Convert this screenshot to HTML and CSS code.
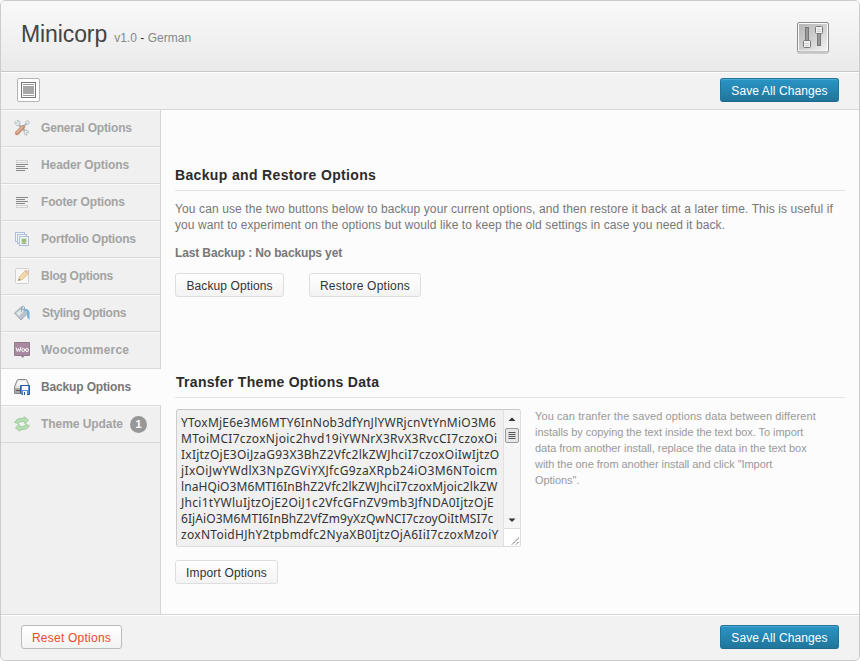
FILE: index.html
```
<!DOCTYPE html>
<html lang="en">
<head>
<meta charset="utf-8">
<title>Minicorp Options</title>
<link rel="stylesheet" href="styles.css">
</head>
<body>
<div class="panel">
  <header class="header">
    <div class="brand"><h1>Minicorp</h1><span class="version">v1.0 <b>-</b> German</span></div>
    <svg class="logo" width="34" height="34" viewBox="0 0 34 34">
      <defs><linearGradient id="lg" x1="0" y1="0" x2="1" y2="1"><stop offset="0" stop-color="#b5b5b5"/><stop offset=".55" stop-color="#d2d2d2"/><stop offset="1" stop-color="#f4f4f4"/></linearGradient></defs>
      <rect x="1.5" y="2.5" width="31" height="30" rx="1.5" fill="#fff" stroke="#ccc"/>
      <rect x="1.5" y="1.5" width="31" height="29.500" rx="1.500" fill="#fafafa" stroke="#8c8c8c"/>
      <rect x="3" y="3" width="28" height="26.500" fill="url(#lg)"/>
      <rect x="9.500" y="6.500" width="3" height="14" fill="#999" stroke="#777"/>
      <rect x="21.500" y="11.500" width="3" height="13" fill="#999" stroke="#777"/>
      <rect x="7.500" y="19.500" width="7" height="7" rx="1" fill="#f2f2f2" stroke="#777"/>
      <rect x="19.500" y="5.500" width="7" height="7" rx="1" fill="#f2f2f2" stroke="#777"/>
      <path d="M9 22.500h4M9 24.500h4M21 8.500h4M21 10.500h4" stroke="#ccc"/>
    </svg>
  </header>
  <div class="toolbar">
    <button class="expand" aria-label="Expand"><svg width="15" height="16" viewBox="0 0 15 16"><rect x=".5" y=".5" width="14" height="15" fill="#fff" stroke="#777"/><path d="M2 2.500h11M2 13.500h11" stroke="#999"/><rect x="2" y="4" width="11" height="8" fill="#a6a6a6"/></svg></button>
    <button class="btn primary">Save All Changes</button>
  </div>
  <div class="body">
    <nav class="side">
      <a class="i1"><svg viewBox="0 0 16 16"><path d="M1 15h6M10 15h4" stroke="#ddd"/><path d="M4 4L12 12" stroke="#9fb0b0" stroke-width="2.400"/><path d="M1 1.500L3 3.500L4.500 2L3 .5C5 0 6.500 1.500 6 4L4.500 5.500C2.500 6 .5 4.500 1 1.500Z" fill="#e8eeee" stroke="#9dabab" stroke-width=".8"/><path d="M10 11.500L12 10C14 10 15 12 14.500 13L13 12L12 13.500L13 15C11 15 9.500 13.500 10 11.500Z" fill="#e8eeee" stroke="#9dabab" stroke-width=".8"/><path d="M9 7L12.500 3.500" stroke="#a5b2b2" stroke-width="2"/><circle cx="13.500" cy="2.500" r="1.700" fill="#f0f0f0" stroke="#a5b2b2"/><path d="M3 13L9 7" stroke="#b87452" stroke-width="4" stroke-linecap="round"/><path d="M3 12.500L8.500 7" stroke="#d9a387" stroke-width="2.200" stroke-linecap="round"/></svg><span>General Options</span></a>
      <a class="i2"><svg viewBox="0 0 16 16"><rect x="2.500" y="3.500" width="11" height="2" fill="#f4f4f4" stroke="#ccc"/><path d="M2 7.500h12M2 9.500h9M2 11.500h12M2 13.500h9" stroke="#777"/></svg><span>Header Options</span></a>
      <a class="i3"><svg viewBox="0 0 16 16"><path d="M2 3.500h12M2 5.500h9M2 7.500h12M2 9.500h9" stroke="#777"/><rect x="2.500" y="11.500" width="11" height="2" fill="#f4f4f4" stroke="#ccc"/></svg><span>Footer Options</span></a>
      <a class="i4"><svg viewBox="0 0 16 16"><g fill="#f5f8fa" stroke="#a0b7d9"><rect x="1.500" y="1.500" width="9" height="9"/><rect x="3.500" y="3.500" width="9" height="9"/><rect x="5.500" y="5.500" width="9" height="9"/></g><rect x="7" y="7" width="6" height="6" fill="#cfdfbd"/><rect x="8" y="8" width="4" height="3" fill="#86b961"/><path d="M10 10v3M8 12.500h4" stroke="#8aa26c"/></svg><span>Portfolio Options</span></a>
      <a class="i5"><svg viewBox="0 0 16 16"><rect x="1.500" y=".5" width="13" height="15" rx="1" fill="#fafafa" stroke="#ccc"/><path d="M4.500 12.500L5.500 8.500L11.500 2.500Q13.500 2 15 5L8.500 11.500Z" fill="#f2d79c" stroke="#d9b272" stroke-width=".8"/><path d="M11.500 2.500Q13.500 1.500 15 5L13.500 6L10.500 3.500Z" fill="#e5b7a0"/><path d="M4.200 12.800L5 10.500L6.800 12Z" fill="#777"/></svg><span>Blog Options</span></a>
      <a class="i6"><svg viewBox="0 0 16 16"><path d="M9 4Q14 3 15.500 7V15L13 12V7Z" fill="#5fa8d3"/><path d="M.5 8L7.500 2L13 8.500L7 15Z" fill="#b5bec6" stroke="#939da5"/><path d="M2.500 8L7.500 4L9.500 6.500L4.500 11Z" fill="#e3e8eb"/><path d="M7.500 7V2Q9 0 10.500 2V5" fill="none" stroke="#7ba6c2"/></svg><span>Styling Options</span></a>
      <a class="i7"><svg viewBox="0 0 16 16"><path d="M1 0H15Q16 0 16 1V13Q16 14 15 14H10L9 16L7 14H1Q0 14 0 13V1Q0 0 1 0Z" fill="#7f6679"/><rect x="1" y="1" width="14" height="12" fill="#9c7893"/><path d="M2 5.500L3.300 9.500L4.500 6.500L5.700 9.500L7 5" fill="none" stroke="#fff"/><circle cx="9.300" cy="8" r="1.500" fill="none" stroke="#fff"/><circle cx="13" cy="8" r="1.500" fill="none" stroke="#fff"/></svg><span>Woocommerce</span></a>
      <a class="i8 active"><svg viewBox="0 0 16 16"><path d="M3 1.500Q3.300 .5 4.500 .5H11.500Q12.700 .5 13 1.500L15.500 8V14.500H.5V8Z" fill="#e3e3e3" stroke="#888"/><path d="M4 2H12L13.500 7H2.500Z" fill="#f8f8f8"/><rect x="1" y="9" width="6" height="5" fill="#aaa"/><path d="M2 11.500h4" stroke="#555"/><path d="M6.500 6.500H15.500V15.500H8L6.500 14Z" fill="#5b8fd8" stroke="#2858a4"/><rect x="8" y="7" width="6" height="4" fill="#fff"/><rect x="9" y="12" width="4" height="4" fill="#f4f4f4"/><path d="M10.500 13v3" stroke="#2858a4"/></svg><span>Backup Options</span></a>
      <a class="i9"><svg viewBox="0 0 16 16"><g fill="#aedaaa" stroke="#86bf86" stroke-width=".8" stroke-linejoin="round"><path d="M.5 6.500Q3 1.500 9.500 2.500L10 .8L14.500 4L11 8L10.500 5.800Q6 4.500 4.500 7.500Z"/><path d="M15.500 9.500Q13 14.500 6.500 13.500L6 15.200L1.500 12L5 8L5.500 10.200Q10 11.500 11.500 8.500Z"/></g></svg><span>Theme Update</span><i class="badge">1</i></a>
    </nav>
    <main class="main">
      <section class="backup">
        <h2 class="h-backup">Backup and Restore Options</h2>
        <p class="desc"><span class="d1">You can use the two buttons below to backup your current options, and then restore it back at a later time. This is useful if</span><br><span class="d2">you want to experiment on the options but would like to keep the old settings in case you need it back.</span></p>
        <p class="last">Last Backup : No backups yet</p>
        <div class="actions"><button class="btn w109">Backup Options</button><button class="btn w112">Restore Options</button></div>
      </section>
      <section class="transfer">
        <h2 class="h-transfer">Transfer Theme Options Data</h2>
        <div class="row">
          <div class="textbox">
            <div class="data">
              <div>YToxMjE6e3M6MTY6InNob3dfYnJlYWRjcnVtYnMiO3M6</div>
              <div>MToiMCI7czoxNjoic2hvd19iYWNrX3RvX3RvcCI7czoxOi</div>
              <div>IxIjtzOjE3OiJzaG93X3BhZ2Vfc2lkZWJhciI7czoxOiIwIjtzO</div>
              <div>jIxOiJwYWdlX3NpZGViYXJfcG9zaXRpb24iO3M6NToicm</div>
              <div>lnaHQiO3M6MTI6InBhZ2Vfc2lkZWJhciI7czoxMjoic2lkZW</div>
              <div>Jhci1tYWluIjtzOjE2OiJ1c2VfcGFnZV9mb3JfNDA0IjtzOjE</div>
              <div>6IjAiO3M6MTI6InBhZ2VfZm9yXzQwNCI7czoyOiItMSI7c</div>
              <div>zoxNToidHJhY2tpbmdfc2NyaXB0IjtzOjA6IiI7czoxMzoiY</div>
            </div>
            <div class="scroll">
              <div class="track">
                <svg width="16" height="18" viewBox="0 0 16 18"><path d="M4.500 11L8 7.500L11.500 11Z" fill="#333"/></svg>
                <svg width="16" height="16" viewBox="0 0 16 16"><rect x="1.500" y=".5" width="13" height="14" rx="1.500" fill="#e6e6e6" stroke="#999"/><path d="M4.500 4.500h7M4.500 6.500h7M4.500 8.500h7M4.500 10.500h7" stroke="#555"/></svg>
                <svg class="down" width="16" height="17" viewBox="0 0 16 17"><path d="M4.500 7.500L8 11L11.500 7.500Z" fill="#333"/></svg>
              </div>
              <svg class="grip" width="16" height="17" viewBox="0 0 16 17"><path d="M8 15.500L15 8.500M12 15.500L15 12.500" stroke="#444" stroke-dasharray="1.500 .7"/></svg>
            </div>
          </div>
          <p class="help"><span class="p1">You can tranfer the saved options data between different</span><br>installs by copying the text inside the text box. To import<br>data from another install, replace the data in the text box<br>with the one from another install and click "Import<br>Options".</p>
        </div>
        <button class="btn w103">Import Options</button>
      </section>
    </main>
  </div>
  <footer class="footer">
    <button class="btn reset">Reset Options</button>
    <button class="btn primary">Save All Changes</button>
  </footer>
</div>
</body>
</html>
```
FILE: styles.css
```
* { box-sizing: border-box; }
body { margin: 0; background: #fff; font: 12px/16px "Liberation Sans", Arial, sans-serif; color: #777; white-space: nowrap; }
h1, h2, p { margin: 0; }
.panel { width: 860px; height: 661px; border: 1px solid #ccc; border-radius: 5px; overflow: hidden; display: flex; flex-direction: column; background: #f2f2f2; }
.header { height: 71px; flex: none; display: flex; justify-content: space-between; align-items: flex-start; padding: 19px 29px 0 20px; background: linear-gradient(#f9f9f9, #eaeaea); border-bottom: 1px solid #c8c8c8; }
.brand { display: flex; align-items: baseline; gap: 7px; }
h1 { font-size: 23px; line-height: 28px; font-weight: 400; letter-spacing: -.1px; color: #444; }
.version { color: #888; letter-spacing: .03px; }
.version b { font-weight: 400; color: #333; }
.logo { display: block; margin-top: 1px; }
.toolbar { height: 38px; flex: none; display: flex; align-items: center; justify-content: space-between; padding: 0 20px 2px 16px; border-top: 1px solid #fff; border-bottom: 1px solid #d8d8d8; }
.expand { width: 23px; height: 24px; padding: 0; border: 1px solid #b5b5b5; border-radius: 2px; background: #fff; display: flex; align-items: center; justify-content: center; }
.btn { height: 24px; padding: 1px 0 0; border: 1px solid #dedede; border-radius: 3px; background: linear-gradient(#fff, #f3f3f3); font: 12px/20px "Liberation Sans", Arial, sans-serif; color: #333; letter-spacing: .15px; text-align: center; }
.w109 { width: 109px; letter-spacing: .1px; }
.w112 { width: 112px; letter-spacing: .23px; }
.w103 { width: 103px; }
.btn.primary { width: 119px; color: #fff; border-color: #21759b #21759b #1e6a8d; background: linear-gradient(#2a95c5, #21759b); box-shadow: inset 0 1px 0 #4aa9d2; letter-spacing: .1px; }
.btn.reset { width: 101px; color: #ea4a2a; border-color: #bbb; letter-spacing: .24px; }
.body { height: 505px; flex: none; display: flex; border-bottom: 1px solid #d5d5d5; }
.side { width: 160px; flex: none; display: flex; flex-direction: column; background: #f0f0f0; border-right: 1px solid #d5d5d5; }
.side a { height: 37px; flex: none; display: flex; align-items: center; padding: 0 0 1px 13px; border-top: 1px solid #fafafa; border-bottom: 1px solid #d8d8d8; font-weight: 700; color: #a3a3a3; }
.side svg { width: 16px; height: 16px; margin-right: 11px; opacity: .85; }
.side .active { margin-right: -1px; background: #fcfcfc; border-top-color: #fcfcfc; color: #777; }
.side .active svg { opacity: 1; }
.i1 { letter-spacing: -.17px; }
.i2 { letter-spacing: -.1px; }
.i3 { letter-spacing: -.16px; }
.i4 { letter-spacing: -.19px; }
.i5 { letter-spacing: -.28px; }
.i6 { letter-spacing: -.31px; }
.side .i6 svg { margin-right: 12px; }
.i7 { letter-spacing: .22px; }
.i8 { letter-spacing: -.15px; }
.i9 { letter-spacing: -.06px; }
.badge { width: 17px; height: 17px; margin-left: 7px; border-radius: 50%; background: #979797; color: #fff; font: 700 11px/17px "Liberation Sans", Arial, sans-serif; text-align: center; }
.main { flex: 1; background: #fcfcfc; padding: 0 14px; }
h2 { font-size: 14px; line-height: 18px; color: #2b2b2b; padding-bottom: 6px; border-bottom: 1px solid #e5e5e5; }
.h-backup { letter-spacing: .35px; }
.h-transfer { letter-spacing: .3px; text-indent: 1px; }
.backup { padding-top: 56px; height: 263px; }
.desc { margin-top: 10px; }
.d1 { letter-spacing: .114px; }
.d2 { letter-spacing: .088px; }
.last { margin-top: 12px; font-weight: 700; letter-spacing: -.13px; }
.actions { display: flex; gap: 25px; margin-top: 12px; }
.row { display: flex; gap: 14px; margin: 11px 0 13px 1px; }
.textbox { width: 345px; height: 138px; flex: none; display: flex; border: 1px solid #ddd; border-top-color: #c8c8c8; border-left-color: #ccc; border-radius: 3px; background: #f0f0f0; overflow: hidden; }
.data { flex: 1; padding: 5px 0 0 4px; overflow: hidden; font: 12px/16px "Noto Sans", sans-serif; color: #333; }
.data div:nth-child(1) { letter-spacing: .233px; }
.data div:nth-child(2) { letter-spacing: .3px; }
.data div:nth-child(3) { letter-spacing: .24px; }
.data div:nth-child(4) { letter-spacing: .36px; }
.data div:nth-child(5) { letter-spacing: .08px; }
.data div:nth-child(6) { letter-spacing: .28px; }
.data div:nth-child(7) { letter-spacing: .08px; }
.data div:nth-child(8) { letter-spacing: .29px; }
.scroll { width: 17px; display: flex; flex-direction: column; border-left: 1px solid #e2e2e2; }
.scroll svg { display: block; flex: none; }
.track { flex: 1; display: flex; flex-direction: column; background: #f5f5f5; border-bottom: 1px solid #ddd; }
.track .down { margin-top: auto; }
.scroll .grip { background: #fff; }
.help { margin-top: -1px; font-size: 11px; color: #999; letter-spacing: -.05px; }
.p1 { letter-spacing: .1px; }
.footer { flex: 1; display: flex; justify-content: space-between; align-items: flex-start; padding: 9px 20px 0; border-top: 1px solid #fff; }
```
